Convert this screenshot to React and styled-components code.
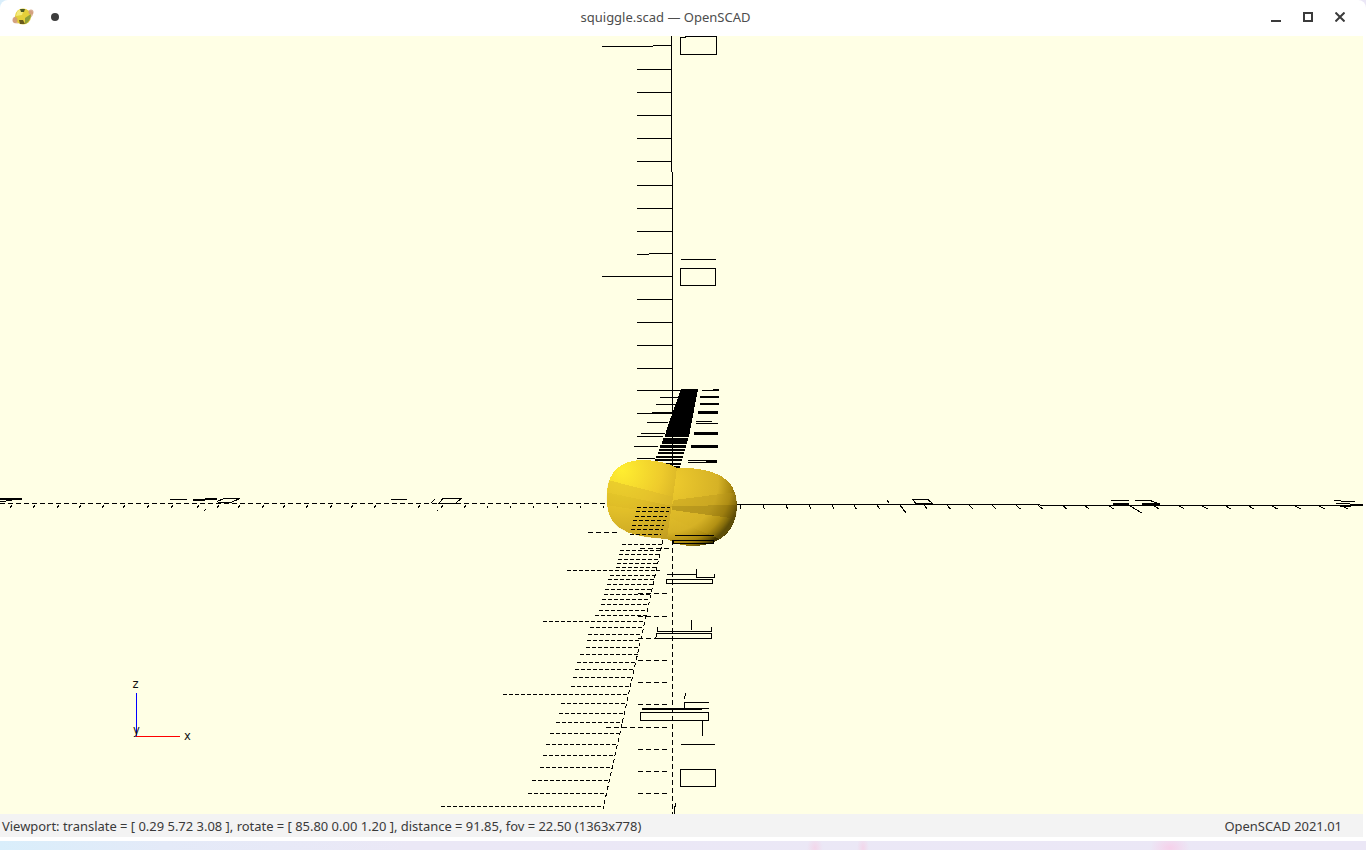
import React from "react"
import styled, { createGlobalStyle } from 'styled-components';

const GlobalStyle = createGlobalStyle`
    html, body {
        margin: 0;
        padding: 0;
        height: 100%;
        overflow: hidden;
    }
    #root {
        height: 100%;
    }
`;

const Desktop = styled.div`
    width: 1366px;
    height: 850px;
    overflow: hidden;
    background:
        radial-gradient(ellipse 8px 12px at 815px 848px, #f3d6ea, transparent),
        radial-gradient(ellipse 6px 12px at 863px 848px, #f3d6ea, transparent),
        radial-gradient(ellipse 20px 14px at 1170px 848px, #f6d0ea, transparent),
        linear-gradient(90deg, #d9eefb 0%, #e4eaf8 12%, #ebe8f6 30%, #ebe7f6 100%);
    font-family: "Noto Sans", sans-serif;
`;

const Window = styled.div`
    height: 841px;
    display: flex;
    flex-direction: column;
    background: #fff;
    border-radius: 8px 8px 0 0;
    overflow: hidden;
`;

const TitleBar = styled.div`
    height: 36px;
    flex: none;
    box-sizing: border-box;
    padding-bottom: 2px;
    display: grid;
    grid-template-columns: 165px 1fr 200px;
    align-items: center;
    color: #4d4d4d;
    font-size: 13px;
`;

const TitleLeft = styled.div`
    display: flex;
    align-items: center;
    gap: 17px;
    padding-left: 12px;
`;

const PinDot = styled.span`
    width: 8px;
    height: 8px;
    border-radius: 50%;
    background: #3d3d3d;
`;

const Title = styled.div`
    text-align: center;
`;

const Controls = styled.div`
    display: flex;
    justify-content: flex-end;
    gap: 22px;
    padding-right: 21px;
`;

const ControlIcon = styled.svg`
    width: 10px;
    height: 10px;
    display: block;
    stroke: #3b3b3b;
    stroke-width: 2;
    fill: none;
`;

const Viewport = styled.div`
    flex: none;
    height: 778px;
    margin-right: 3px;
    background: #ffffe5;
    overflow: hidden;
`;

const Scene = styled.svg`
    display: block;
    width: 1363px;
    height: 778px;
`;

const AxisLabel = styled.text`
    font-family: "DejaVu Sans", sans-serif;
    font-size: 11.5px;
    fill: #111;
`;

const StatusBar = styled.div`
    height: 23px;
    flex: none;
    box-sizing: border-box;
    margin: 0 3px 4px 0;
    padding: 0 21px 0 2px;
    display: flex;
    align-items: center;
    justify-content: space-between;
    background: #f3f3f3;
    color: #3a3a3a;
    font-size: 12.95px;
    white-space: nowrap;
`;

const AppLogo = () => (
    <svg width="22" height="20" viewBox="0 0 22 20">
        <ellipse cx="11" cy="10" rx="11" ry="5" transform="rotate(-25 11 10)" fill="#d9a57e" opacity="0.75" />
        <circle cx="11" cy="9.5" r="8" fill="#e4cf3a" />
        <path d="M5 5 C7 2 10 1.5 12 2 L10 8 L4 9 Z" fill="#f4ea7a" />
        <path d="M13 11 L19 7 C19 11 17 15 13 17 Z" fill="#8f9f38" />
        <path d="M8 2 L13 2 L12 5 L9 5 Z" fill="#4d5a24" />
        <path d="M7 13 L11 13 L13 17 L8 17 Z" fill="#6b5c1c" />
        <ellipse cx="3" cy="13" rx="2.5" ry="3" fill="#cf9a78" opacity="0.8" />
        <ellipse cx="19" cy="5" rx="2.5" ry="2.5" fill="#cf9a78" opacity="0.8" />
    </svg>
);

// straight line helper, everything in the scene is given in screen coords
const seg = (x1, y1, x2, y2, key, w = 1, dash) => (
    <line key={key} x1={x1} y1={y1} x2={x2} y2={y2} stroke="#000" strokeWidth={w} strokeDasharray={dash} />
);

const upperTicks = [69.5, 92.5, 115.5, 138.5, 161.5, 185.5, 208.5, 231.5, 299.5, 322.5, 345.5, 368.5];

const bandLeft = [
    [637, 681, 390.5, 1], [660, 682, 397.5, 1], [656, 678, 404.5, 1], [637, 671, 413.5, 1],
    [652, 672, 412.5, 2], [647, 668, 422.5, 1], [641, 665, 433.5, 1], [637, 663, 436.5, 1],
    [634, 658, 446.5, 1], [637, 655, 458.5, 1],
];

const bandRight = [
    [702, 719, 390.5, 1], [713, 719, 389.5, 2], [700, 719, 396.5, 2], [700, 719, 404, 2],
    [698, 718, 412.5, 3], [696, 712, 421.5, 1], [696, 718, 423, 1], [694, 718, 433.5, 3],
    [691, 718, 446.5, 3], [688, 706, 460, 1], [688, 717, 462.5, 1], [706, 717, 461.5, 3],
];

// the tapering stripes between the solid part of the band and the blob: [from, to, y, weight]
const bandStripes = [
    [666, 690, 432, 3], [665, 689, 435.5, 3], [663, 688, 439, 3], [662, 687, 442.5, 3],
    [660, 686, 446, 3], [659, 685, 449.5, 2], [658, 684, 453, 2], [656, 683, 456.5, 2],
    [655, 682, 460, 2], [654, 681, 463.5, 2], [652, 680, 467, 2],
];

const lowerRows = [
    [622, 662, 544], [620, 660, 550], [619, 660, 554.5], [618, 659, 559], [617, 658, 563],
    [616, 657, 567], [567, 660, 570.5], [610, 656, 575], [608, 654, 579.5], [607, 653, 584],
    [605, 652, 589], [604, 651, 594], [602, 649, 599.5], [601, 648, 604.5], [599, 647, 610.5],
    [595, 647, 615.5], [543, 643, 621.5], [590, 642, 627.5], [588, 641, 634.5], [587, 641, 640.5],
    [586, 639, 647.5], [580, 638, 654.5], [577, 636, 662], [575, 634, 669.5], [573, 632, 677.5],
    [571, 630, 686], [503, 628, 694.5], [561, 627, 703.5], [559, 624, 713.5], [556, 623, 722.5],
    [550, 620, 733.5], [546, 617, 744.5], [543, 614, 755.5], [540, 611, 767.5], [532, 608, 780.5],
    [528, 605, 793.5], [441, 602, 806.5],
];

const centerTicks = [
    [588, 618, 532.5], [640, 670, 548.5], [638, 670, 593.5], [638, 670, 616.5], [638, 670, 638.5],
    [638, 670, 660.5], [638, 670, 682.5], [638, 670, 704.5], [606, 670, 727.5], [638, 670, 749.5],
    [638, 670, 771.5], [638, 670, 793.5],
];

const leftDots = [10, 33, 57, 79, 102, 123, 147, 171, 197, 217, 238, 262, 283, 306, 330, 351, 374, 418, 441, 464];
const leftSpecks = [487, 510, 533, 557, 580, 603];
const rightTicks = [740, 763, 786, 809, 832, 854, 877, 924, 947, 969, 992, 1016, 1038, 1062, 1084, 1108, 1153, 1178, 1201, 1224, 1247, 1270, 1293, 1317, 1340];

const blobDashes = [507, 511, 516, 520, 525, 529, 534];

const LEFT_LOBE = "M613 473 C620 463 632 460 642 460 C655 460 670 463 677 468 L667 539 C650 538 630 536 618 527 C608 519 606 505 607 494 C607 486 609 479 613 473 Z";
const RIGHT_LOBE = "M677 468 C697 467 718 471 728 481 C738 491 739 510 734 522 C728 537 714 546 692 546 C680 546 672 542 667 539 Z";

const Blob = () => (
    <g>
        <defs>
            <radialGradient id="leftLobe" gradientUnits="userSpaceOnUse" cx="622" cy="470" r="80">
                <stop offset="0" stopColor="#ffee30" />
                <stop offset="0.5" stopColor="#eecb2c" />
                <stop offset="1" stopColor="#c39e22" />
            </radialGradient>
            <radialGradient id="rightLobe" gradientUnits="userSpaceOnUse" cx="668" cy="482" r="74">
                <stop offset="0" stopColor="#f0cd2e" />
                <stop offset="0.68" stopColor="#d6b226" />
                <stop offset="0.86" stopColor="#a8870f" />
                <stop offset="0.95" stopColor="#6c5704" />
                <stop offset="1" stopColor="#3d3200" />
            </radialGradient>
            <clipPath id="leftClip"><path d={LEFT_LOBE} /></clipPath>
            <clipPath id="rightClip"><path d={RIGHT_LOBE} /></clipPath>
        </defs>
        <path fill="url(#leftLobe)" d={LEFT_LOBE} />
        <path fill="url(#rightLobe)" d={RIGHT_LOBE} />
        <g clipPath="url(#leftClip)">
            <polygon points="600,478 674,497 672,506 600,491" fill="#d9b62a" opacity="0.45" />
            <polygon points="600,491 672,506 670,515 600,504" fill="#b8951c" opacity="0.28" />
            <polygon points="600,504 670,515 660,545 600,545" fill="#c8a524" opacity="0.3" />
        </g>
        <g clipPath="url(#rightClip)">
            <polygon points="674,500 745,491 745,505 672,506" fill="#b8951c" opacity="0.4" />
            <polygon points="672,506 745,505 745,520 672,510" fill="#8d7210" opacity="0.45" />
            <polygon points="672,510 745,520 745,550 670,518" fill="#d4b024" opacity="0.22" />
        </g>
    </g>
);

const Drawing = () => (
    <Scene viewBox="0 36 1363 778" shapeRendering="crispEdges">
        <g fill="none" stroke="#000">
            {/* dense slanted band, runs behind the blob */}
            <polygon points="681,389 698,389 690,431 666,431" fill="#000" stroke="none" />
            {bandStripes.map(([a, b, y, w], i) => seg(a, y, b, y, `bs${i}`, w))}
            {seg(672.5, 172, 672.5, 470, 'vb')}
        </g>
        <Blob />
        <g fill="none" stroke="#000">
            {/* vertical axis, upper half */}
            {seg(671.5, 36, 671.5, 172, 'va')}
            {seg(602, 46.5, 653, 46.5, 'lt1')}
            {seg(653, 45.5, 672, 45.5, 'lt2')}
            {seg(602, 276.5, 672, 276.5, 'lt3')}
            {seg(637, 254.5, 649, 254.5, 'lt4')}
            {seg(649, 253.5, 672, 253.5, 'lt5')}
            {upperTicks.map((y, i) => seg(637, y, 672, y, `ut${i}`))}
            <path d="M680.5 37.5 H685 V36.5 H716.5 V54.5 H680.5 Z" />
            <rect x="680.5" y="268.5" width="35" height="17" />
            {seg(681, 259.5, 716, 259.5, 'top2')}
            {bandLeft.map(([a, b, y, w], i) => seg(a, y, b, y, `bl${i}`, w))}
            {bandRight.map(([a, b, y, w], i) => seg(a, y, b, y, `br${i}`, w))}

            {/* horizontal axis */}
            {seg(0, 503.5, 607, 503.5, 'hl', 1, '5 3')}
            {seg(737, 504.5, 1040, 504.5, 'hr1')}
            {seg(1040, 505.5, 1363, 505.5, 'hr2')}
            {leftDots.map((x, i) => seg(x + 2, 505, x, 508, `ld${i}`))}
            {leftSpecks.map((x, i) => seg(x, 506, x, 508, `ls${i}`))}
            {rightTicks.map((x, i) => {
                const dx = 1 + (x - 740) * 0.012;
                return seg(x, 505, x + dx, 509, `rt${i}`);
            })}
            {seg(900, 505, 906, 513, 'rl1')}
            {seg(1130, 506, 1142, 513, 'rl2')}
            {seg(887, 500, 889, 503, 'rs1')}
            <polygon points="912.5,499.5 928,499.5 933,504 916.5,504" />
            {seg(916, 504, 933, 504, 'rb1', 2)}
            {seg(1111, 500.5, 1129, 500.5, 'r3')}
            {seg(1113, 503.5, 1129, 503.5, 'r4', 2)}
            <polyline points="1135,500.5 1150,500.5 1160,504" />
            {seg(1142, 504, 1160, 504, 'r5', 2)}
            {seg(1334, 500.5, 1355, 502, 'r6')}
            {seg(1336, 503, 1363, 505, 'r7')}
            {seg(1340, 507, 1363, 505, 'r8')}

            {/* left side boxes on the axis */}
            {seg(0, 499.5, 22, 498.5, 'l1', 2)}
            {seg(0, 501.5, 12, 500.5, 'l2')}
            {seg(170, 499.5, 187, 499.5, 'l3')}
            {seg(193, 500, 217, 499, 'l4', 2)}
            <polyline points="217,501.5 224,498.5 240,498.5 232,502 218,502" />
            {seg(206, 509, 204, 511, 'l7')}
            {seg(391, 499.5, 407, 499.5, 'l5')}
            {seg(435, 499, 431, 503, 'l6')}
            {seg(437, 510, 437, 511, 'l8')}
            <polygon points="443,498.5 461,498.5 456,503 439,503" />

            {/* markers over the blob */}
            {blobDashes.map((y, i) => seg(637 - i * 1.2, y + 0.5, 670 - i * 1.5, y + 0.5, `bd${i}`, 1, '4 2'))}
            {seg(675, 535.5, 714, 535.5, 'bm1')}
            <rect x="673.5" y="540.5" width="40" height="3" />

            {/* lower half, dashed */}
            {seg(672.5, 540, 672.5, 814, 'vc', 1, '5 3')}
            {seg(663, 540, 603, 809, 'vs', 1, '4 3')}
            {lowerRows.map(([a, b, y], i) => seg(a, y, b, y, `lr${i}`, 1, '4 2'))}
            {centerTicks.map(([a, b, y], i) => seg(a, y, b, y, `ct${i}`, 1, '5 3'))}

            {/* boxes on the right of the lower axis */}
            <polyline points="667,574.5 696,574.5 696,577.5 714,577.5 714,574" />
            {seg(696.5, 569, 696.5, 577, 'x1')}
            <rect x="666.5" y="579.5" width="46" height="3.5" />
            <polyline points="657.5,627 657.5,631.5 711.5,631.5 711.5,627" />
            {seg(691.5, 620, 691.5, 630, 'x2')}
            <path d="M655.5 638.5 L657 633.5 H711.5 V638.5 Z" />
            <polyline points="642,709.5 702,709.5" />
            <polyline points="684,709 684.5,702.5 709,702.5" />
            {seg(685.5, 693, 684.5, 699, 'x3')}
            {seg(642, 708.5, 709, 708.5, 'x4')}
            <rect x="640.5" y="712.5" width="68" height="8" />
            {seg(702.5, 720, 702.5, 736, 'x5')}
            {seg(681, 744.5, 715, 744.5, 'x6')}
            <rect x="680.5" y="769.5" width="35" height="17" />
            {seg(675.5, 803, 674, 814, 'x7')}
        </g>
        {/* axes cross */}
        <line x1="136.5" y1="693" x2="136.5" y2="736" stroke="#0000ff" />
        <line x1="136" y1="736.5" x2="180" y2="736.5" stroke="#ff0000" />
        <AxisLabel x="132.5" y="688">z</AxisLabel>
        <AxisLabel x="133" y="734">y</AxisLabel>
        <AxisLabel x="184" y="740">x</AxisLabel>
    </Scene>
);

const App = () => (
    <Desktop>
        <GlobalStyle />
        <Window>
            <TitleBar>
                <TitleLeft>
                    <AppLogo />
                    <PinDot />
                </TitleLeft>
                <Title>squiggle.scad — OpenSCAD</Title>
                <Controls>
                    <ControlIcon viewBox="0 0 10 10"><path d="M0 9H10" /></ControlIcon>
                    <ControlIcon viewBox="0 0 10 10"><rect x="1" y="1" width="8" height="8" /></ControlIcon>
                    <ControlIcon viewBox="0 0 10 10"><path d="M0.5 0.5L9.5 9.5M9.5 0.5L0.5 9.5" /></ControlIcon>
                </Controls>
            </TitleBar>
            <Viewport>
                <Drawing />
            </Viewport>
            <StatusBar>
                <span>Viewport: translate = [ 0.29 5.72 3.08 ], rotate = [ 85.80 0.00 1.20 ], distance = 91.85, fov = 22.50 (1363x778)</span>
                <span>OpenSCAD 2021.01</span>
            </StatusBar>
        </Window>
    </Desktop>
);

export default App;
